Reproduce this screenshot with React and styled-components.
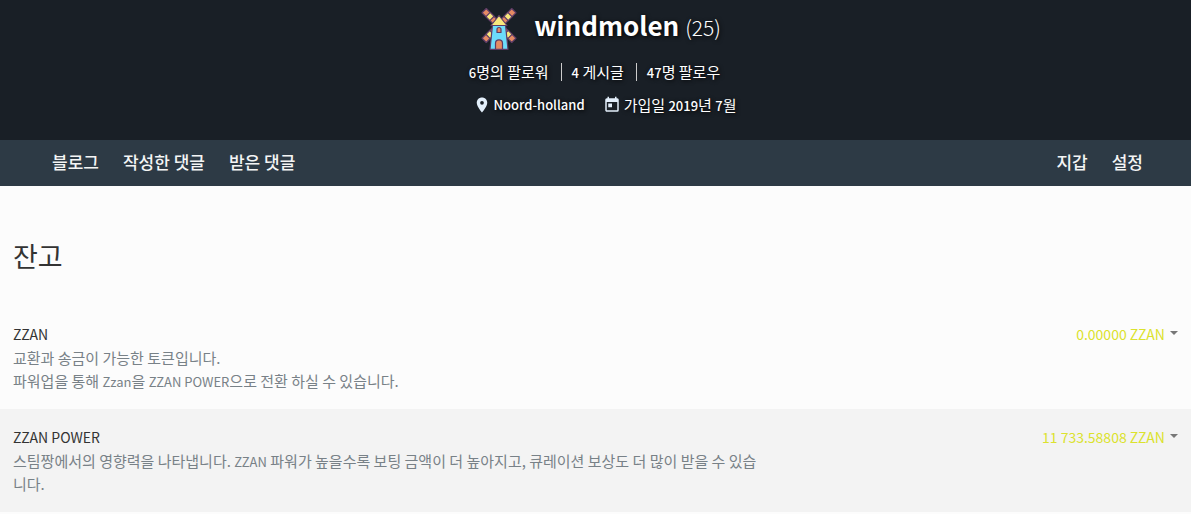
import React from "react";
import styled, { createGlobalStyle } from "styled-components";

const GlobalStyle = createGlobalStyle`
  *, *::before, *::after { box-sizing: border-box; }
  body {
    margin: 0;
    background: #fcfcfc;
    color: #333;
    font-family: "Noto Sans CJK KR", sans-serif;
    font-size: 14px;
    line-height: 23px;
  }
  h1, h2, h3, p, ul { margin: 0; padding: 0; }
  ul { list-style: none; }
  a { color: inherit; text-decoration: none; }
`;

const Banner = styled.header`
  display: flex;
  flex-direction: column;
  align-items: center;
  padding: 6px 16px 24px;
  background: #191f26;
  color: #fff;
  text-shadow: 1px 1px 4px #000;
`;

const Identity = styled.div`
  display: flex;
  align-items: flex-start;
  gap: 16px;
  height: 46px;
  padding-left: 10px;
`;

const UserName = styled.h1`
  font-size: 26px;
  line-height: 38px;
  font-weight: 700;
`;

const Reputation = styled.span`
  font-size: 21px;
  line-height: 1;
  font-weight: 300;
`;

/* Latin letters and digits run smaller than the Hangul around them */
const Latin = styled.span`
  font-size: 13px;
  line-height: 1;
  font-weight: ${(p) => (p.$strong ? 500 : 400)};
`;

const Stats = styled.ul`
  display: flex;
  margin-top: 11px;
  line-height: 18px;
  font-size: 15px;
`;

const Stat = styled.li`
  padding: 0 12px 0 10px;
  & + & { border-left: 1px solid #ccc; }
`;

const Facts = styled.ul`
  display: flex;
  margin-top: 12px;
  font-size: 15px;
`;

const Fact = styled.li`
  display: flex;
  align-items: center;
  gap: 3px;
  padding-left: 18px;
`;

const NavBar = styled.nav`
  display: flex;
  justify-content: space-between;
  padding: 0 36px 0 40px;
  background: #2d3a45;
  color: #f4f5f5;
`;

const NavGroup = styled.ul`
  display: flex;
`;

const NavLink = styled.a`
  display: block;
  padding: 10px 12px 12px;
  font-size: 17px;
  line-height: 24px;
  font-weight: 500;
`;

const Heading = styled.h2`
  padding: 50px 13px 30px;
  font-size: 27px;
  line-height: 40px;
  font-weight: 400;
`;

const BalanceRow = styled.section`
  display: flex;
  justify-content: space-between;
  align-items: flex-start;
  padding: 17px 13px;
  background: ${(p) => (p.$shaded ? "#f3f3f3" : "transparent")};
`;

const Details = styled.div`
  width: 64%;
`;

const TokenName = styled.h3`
  font-size: 14px;
  line-height: 23px;
  font-weight: 400;
`;

const Description = styled.p`
  color: #788187;
  font-size: 15px;
`;

const Amount = styled.button`
  display: flex;
  align-items: center;
  gap: 5px;
  padding: 0;
  border: 0;
  background: none;
  color: #dbe22d;
  font: inherit;
  cursor: pointer;
  &::after {
    content: "";
    margin-bottom: 4px;
    border: 4px solid transparent;
    border-top-color: #777;
    border-bottom: 0;
  }
`;

function Windmill() {
  return (
    <svg width="38" height="44" viewBox="0 0 38 44" aria-hidden="true">
      <g stroke="#5d3c66" strokeWidth="1.200" strokeLinejoin="round">
        {[45, 135, 225, 315].map((a) => (
          <g key={a} transform={`translate(19 19.500) rotate(${a})`}>
            <rect x="-3" y="-21" width="6" height="20" fill="#e58a63" />
            <rect x="-3" y="-15.500" width="6" height="5.500" fill="#f8e87c" />
          </g>
        ))}
        <path d="M12.500 19h13l2.500 24.300H10z" fill="#6cdcfb" />
        <path d="M19 9.500l8 10H11z" fill="#f8e87c" />
        <path d="M17 26.500v-3a2 2 0 0 1 4 0v3z" fill="#e58a63" />
        <path d="M15.500 43.300v-6a3.500 3.500 0 0 1 7 0v6z" fill="#e58a63" />
      </g>
    </svg>
  );
}

function PinIcon() {
  return (
    <svg width="18" height="18" viewBox="0 0 24 24" fill="#e3effb" aria-hidden="true">
      <path d="M12 2C8 2 5 5 5 9c0 5.200 7 13 7 13s7-7.800 7-13c0-4-3-7-7-7zm0 9.500a2.500 2.500 0 1 1 0-5 2.500 2.500 0 0 1 0 5z" />
    </svg>
  );
}

function CalendarIcon() {
  return (
    <svg width="18" height="18" viewBox="0 0 24 24" fill="#e3effb" aria-hidden="true">
      <path d="M19 3h-1V1h-2v2H8V1H6v2H5a2 2 0 0 0-2 2v14c0 1.100.9 2 2 2h14a2 2 0 0 0 2-2V5a2 2 0 0 0-2-2zm0 16H5V8h14v11zM7 10h5v5H7z" />
    </svg>
  );
}

const leftLinks = ["블로그", "작성한 댓글", "받은 댓글"];
const rightLinks = ["지갑", "설정"];

function Links({ items }) {
  return (
    <NavGroup>
      {items.map((label) => (
        <li key={label}><NavLink href="#">{label}</NavLink></li>
      ))}
    </NavGroup>
  );
}

export default function App() {
  return (
    <>
      <GlobalStyle />
      <Banner>
        <Identity>
          <Windmill />
          <UserName>windmolen <Reputation>(25)</Reputation></UserName>
        </Identity>
        <Stats>
          <Stat><a href="#"><Latin $strong>6</Latin>명의 팔로워</a></Stat>
          <Stat><a href="#"><Latin $strong>4</Latin> 게시글</a></Stat>
          <Stat><a href="#"><Latin $strong>47</Latin>명 팔로우</a></Stat>
        </Stats>
        <Facts>
          <Fact><PinIcon /><Latin $strong>Noord-holland</Latin></Fact>
          <Fact>
            <CalendarIcon />
            <span>가입일 <Latin $strong>2019</Latin>년 <Latin $strong>7</Latin>월</span>
          </Fact>
        </Facts>
      </Banner>
      <NavBar>
        <Links items={leftLinks} />
        <Links items={rightLinks} />
      </NavBar>
      <main>
        <Heading>잔고</Heading>
        <BalanceRow>
          <Details>
            <TokenName>ZZAN</TokenName>
            <Description>
              교환과 송금이 가능한 토큰입니다.<br />
              파워업을 통해 <Latin>Zzan</Latin>을 <Latin>ZZAN POWER</Latin>으로 전환 하실 수 있습니다.
            </Description>
          </Details>
          <Amount type="button">0.00000 ZZAN</Amount>
        </BalanceRow>
        <BalanceRow $shaded>
          <Details>
            <TokenName>ZZAN POWER</TokenName>
            <Description>
              스팀짱에서의 영향력을 나타냅니다. <Latin>ZZAN</Latin> 파워가 높을수록 보팅 금액이 더 높아지고, 큐레이션 보상도 더 많이 받을 수 있습니다.
            </Description>
          </Details>
          <Amount type="button">11 733.58808 ZZAN</Amount>
        </BalanceRow>
      </main>
    </>
  );
}
